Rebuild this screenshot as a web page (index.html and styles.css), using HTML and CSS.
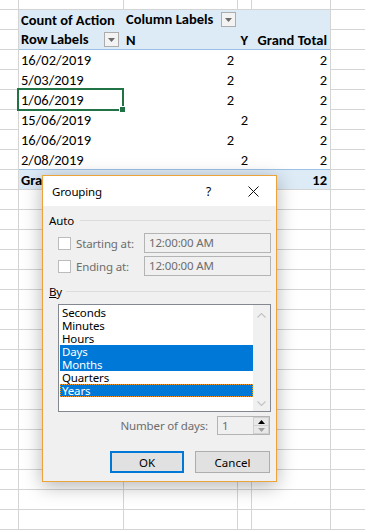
FILE: index.html
```html
<!DOCTYPE html>
<html lang="en">
<head>
    <meta charset="UTF-8">
    <title>Grouping</title>
    <link rel="stylesheet" href="styles.css">
</head>
<body>
    <div class="sheet">
        <div class="pivot">
            <div class="prow head">
                <div class="cell">Count of Action</div>
                <div class="cell with-filter">Column Labels <span class="filter"><svg width="7" height="4" viewBox="0 0 7 4"><polygon points="0,0 7,0 3.5,4" fill="#6b6b6b"/></svg></span></div>
                <div class="cell"></div>
                <div class="cell"></div>
            </div>
            <div class="prow head head-last">
                <div class="cell with-filter row-filter">Row Labels <span class="filter"><svg width="7" height="4" viewBox="0 0 7 4"><polygon points="0,0 7,0 3.5,4" fill="#6b6b6b"/></svg></span></div>
                <div class="cell">N</div>
                <div class="cell num">Y</div>
                <div class="cell num">Grand Total</div>
            </div>
            <div class="prow">
                <div class="cell">16/02/2019</div>
                <div class="cell num">2</div>
                <div class="cell num"></div>
                <div class="cell num">2</div>
            </div>
            <div class="prow">
                <div class="cell">5/03/2019</div>
                <div class="cell num">2</div>
                <div class="cell num"></div>
                <div class="cell num">2</div>
            </div>
            <div class="prow">
                <div class="cell">1/06/2019</div>
                <div class="cell num">2</div>
                <div class="cell num"></div>
                <div class="cell num">2</div>
            </div>
            <div class="prow">
                <div class="cell">15/06/2019</div>
                <div class="cell num"></div>
                <div class="cell num">2</div>
                <div class="cell num">2</div>
            </div>
            <div class="prow">
                <div class="cell">16/06/2019</div>
                <div class="cell num">2</div>
                <div class="cell num"></div>
                <div class="cell num">2</div>
            </div>
            <div class="prow before-total">
                <div class="cell">2/08/2019</div>
                <div class="cell num"></div>
                <div class="cell num">2</div>
                <div class="cell num">2</div>
            </div>
            <div class="prow total">
                <div class="cell">Grand Total</div>
                <div class="cell num"></div>
                <div class="cell num"></div>
                <div class="cell num">12</div>
            </div>
        </div>

        <div class="selection"></div>

        <div class="dialog">
            <div class="titlebar">
                <span class="title">Grouping</span>
                <span class="help">?</span>
                <svg class="close" width="11" height="11" viewBox="0 0 11 11"><path d="M0.5 0.5 L10.5 10.5 M10.5 0.5 L0.5 10.5" stroke="#111" stroke-width="1"/></svg>
            </div>
            <div class="dlg-body">
                <div class="group-head"><span>Auto</span><span class="rule"></span></div>
                <div class="check-row">
                    <span class="checkbox"></span>
                    <span class="muted">Starting at:</span>
                    <span class="textbox">12:00:00 AM</span>
                </div>
                <div class="check-row second">
                    <span class="checkbox"></span>
                    <span class="muted">Ending at:</span>
                    <span class="textbox">12:00:00 AM</span>
                </div>

                <div class="group-head by"><span><u>B</u>y</span><span class="rule"></span></div>
                <div class="listbox">
                    <ul class="items">
                        <li>Seconds</li>
                        <li>Minutes</li>
                        <li>Hours</li>
                        <li class="on">Days</li>
                        <li class="on">Months</li>
                        <li>Quarters</li>
                        <li class="on focus">Years</li>
                    </ul>
                    <div class="scrollbar">
                        <svg width="9" height="5" viewBox="0 0 9 5"><path d="M0.5 4.5 L4.5 0.5 L8.5 4.5" fill="none" stroke="#c4c4c4" stroke-width="1.2"/></svg>
                        <svg width="9" height="5" viewBox="0 0 9 5"><path d="M0.5 0.5 L4.5 4.5 L8.5 0.5" fill="none" stroke="#c4c4c4" stroke-width="1.2"/></svg>
                    </div>
                </div>

                <div class="days-row">
                    <span class="muted">Number of days:</span>
                    <span class="spin">
                        <span class="spin-val">1</span>
                        <span class="spin-btns">
                            <span class="spin-up"><svg width="7" height="4" viewBox="0 0 7 4"><polygon points="0,4 7,4 3.5,0" fill="#000"/></svg></span>
                            <span class="spin-down"><svg width="7" height="4" viewBox="0 0 7 4"><polygon points="0,0 7,0 3.5,4" fill="#a0a0a0"/></svg></span>
                        </span>
                    </span>
                </div>

                <div class="buttons">
                    <button class="btn btn-default">OK</button>
                    <button class="btn">Cancel</button>
                </div>
            </div>
        </div>
    </div>
</body>
</html>
```

FILE: styles.css
```css
body {
    margin: 0;
    width: 365px;
    height: 530px;
    overflow: hidden;
    background: #fff;
    color: #000;
    font-family: Calibri, Carlito, Lato, sans-serif;
    font-size: 14.5px;
}

/* spreadsheet grid: gridlines are the sheet background */
.sheet {
    position: relative;
    height: 530px;
    padding-top: 10px;
    box-sizing: border-box;
    background-color: #fff;
    background-image:
        linear-gradient(to right,
            transparent 18px, #d4d4d4 18px 19px,
            transparent 19px 123px, #d4d4d4 123px 124px,
            transparent 124px 237px, #d4d4d4 237px 238px,
            transparent 238px 251px, #d4d4d4 251px 252px,
            transparent 252px 330px, #d4d4d4 330px 331px,
            transparent 331px),
        repeating-linear-gradient(to bottom, #d4d4d4 0 1px, transparent 1px 20px);
    background-position: 0 0, 0 9px;
}

.pivot {
    margin-left: 19px;
    width: 311px;
}
.prow {
    display: grid;
    grid-template-columns: 104px 113px 13px 78px;
    column-gap: 1px;
    height: 19px;
    line-height: 19px;
    background: #fff;
    border-bottom: 1px solid #fff;
}
.prow.head {
    background: #ddebf7;
    border-bottom-color: #ddebf7;
    font-weight: bold;
}
.prow.head-last,
.prow.before-total {
    border-bottom-color: #9bc2e6;
}
.prow.total {
    background: #ddebf7;
    font-weight: bold;
    border-bottom: 0;
}
.cell {
    height: 19px;
    box-sizing: border-box;
    padding: 1px 2px 0;
    line-height: 19px;
    white-space: nowrap;
}
.num {
    text-align: right;
    padding-right: 3px;
    padding-left: 0;
}
.with-filter {
    display: flex;
    justify-content: space-between;
    align-items: center;
    padding: 0 1px 0 2px;
}
.with-filter.row-filter {
    padding-right: 4px;
}
.filter {
    display: inline-flex;
    align-items: center;
    justify-content: center;
    width: 15px;
    height: 15px;
    box-sizing: border-box;
    border: 1px solid #acacac;
    background: #f3f3f3;
}

/* active cell */
.selection {
    position: absolute;
    left: 17px;
    top: 88px;
    width: 107px;
    height: 23px;
    box-sizing: border-box;
    border: 2px solid #217346;
}
.selection::after {
    content: "";
    position: absolute;
    right: -4px;
    bottom: -4px;
    width: 5px;
    height: 5px;
    background: #217346;
    border: 1px solid #fff;
}

/* Grouping dialog */
.dialog {
    position: absolute;
    left: 42px;
    top: 175px;
    width: 235px;
    height: 307px;
    box-sizing: border-box;
    border: 1px solid #eba33c;
    background: #f0f0f0;
    box-shadow: 0 4px 18px rgba(0, 0, 0, 0.3);
    font-family: "Segoe UI", "Noto Sans", sans-serif;
    font-size: 11.5px;
    letter-spacing: -0.15px;
    color: #000;
}
.titlebar {
    display: flex;
    align-items: center;
    height: 30px;
    background: #fff;
    padding: 0 17px 0 9px;
}
.title {
    flex: 1;
}
.help {
    margin-right: 37px;
    font-size: 12px;
}
.dlg-body {
    padding: 6px 5px 0 6px;
}
.group-head {
    display: flex;
    align-items: center;
    gap: 6px;
    height: 16px;
}
.group-head.by {
    margin-top: 7px;
    gap: 4px;
}
.rule {
    flex: 1;
    height: 1px;
    background: #dcdcdc;
}
.check-row {
    display: flex;
    align-items: center;
    height: 20px;
    margin-top: 5px;
}
.check-row.second {
    margin-top: 3px;
}
.checkbox {
    width: 13px;
    height: 13px;
    box-sizing: border-box;
    margin: 0 5px 0 9px;
    border: 1px solid #bcbcbc;
    background: #fff;
}
.muted {
    color: #6d6d6d;
}
.textbox {
    margin-left: auto;
    width: 127px;
    height: 20px;
    line-height: 18px;
    box-sizing: border-box;
    padding-left: 4px;
    border: 1px solid #b4b4b4;
    background: #f0f0f0;
    color: #6d6d6d;
}

.listbox {
    display: flex;
    width: 213px;
    height: 108px;
    margin: 5px 0 0 9px;
    box-sizing: border-box;
    border: 1px solid #828790;
    background: #fff;
}
.items {
    list-style: none;
    margin: 0;
    padding: 1px 0 0 1px;
    width: 193px;
}
.items li {
    height: 13px;
    line-height: 13px;
    padding-left: 2px;
}
.items li.on {
    background: #0078d7;
    color: #fff;
}
.items li.focus {
    outline: 1px dotted #f29a1f;
    outline-offset: -1px;
}
.scrollbar {
    margin-left: auto;
    width: 17px;
    padding: 8px 0 5px;
    display: flex;
    flex-direction: column;
    justify-content: space-between;
    align-items: center;
    background: #f0f0f0;
}

.days-row {
    display: flex;
    justify-content: flex-end;
    align-items: center;
    gap: 9px;
    margin-top: 4px;
    padding-right: 1px;
}
.spin {
    display: flex;
    width: 53px;
    height: 19px;
    box-sizing: border-box;
    border: 1px solid #b4b4b4;
    background: #f0f0f0;
}
.spin-val {
    flex: 1;
    padding-left: 4px;
    line-height: 17px;
    color: #6d6d6d;
}
.spin-btns {
    display: flex;
    flex-direction: column;
    width: 16px;
}
.spin-up,
.spin-down {
    flex: 1;
    display: flex;
    align-items: center;
    justify-content: center;
    background: #e8e8e8;
    border: 1px solid #d0d0d0;
}
.spin-up {
    border-bottom: 0;
}

.buttons {
    display: flex;
    justify-content: flex-end;
    gap: 11px;
    margin-top: 16px;
    padding-right: 1px;
}
.btn {
    width: 75px;
    height: 22px;
    padding: 0;
    box-sizing: border-box;
    border: 1px solid #adadad;
    background: #e1e1e1;
    font: inherit;
    color: #000;
}
.btn-default {
    width: 74px;
    border: 2px solid #0078d7;
}
```
